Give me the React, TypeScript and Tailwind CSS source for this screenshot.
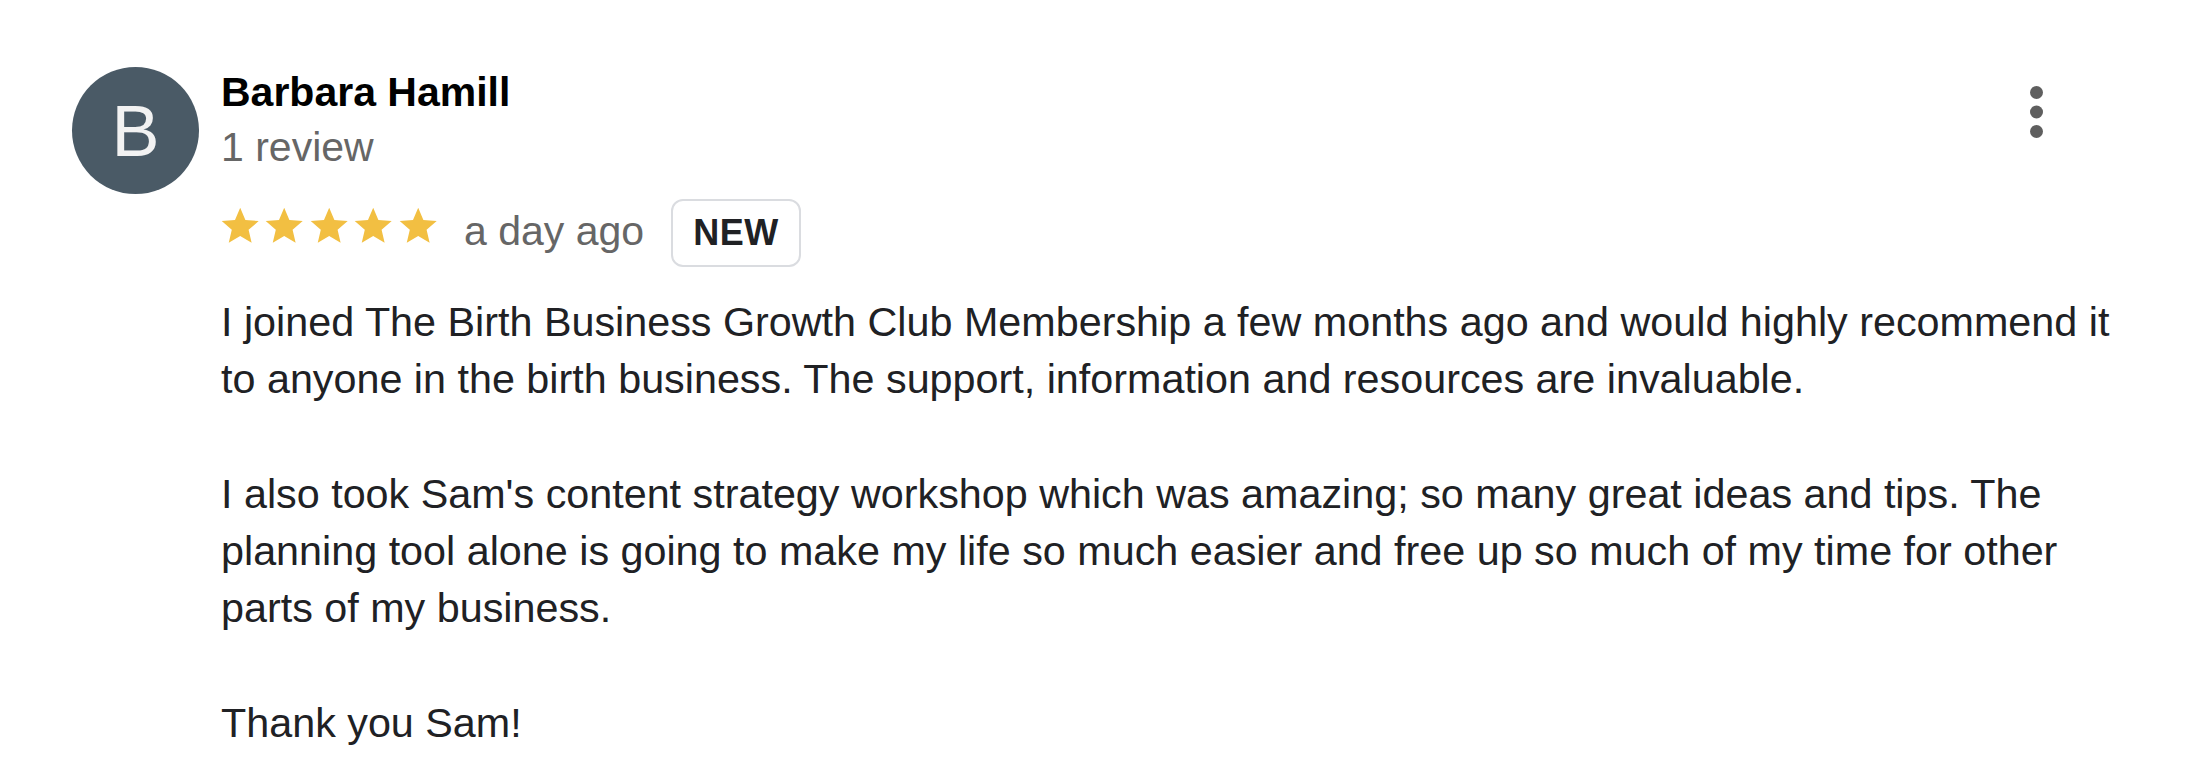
import {ReactElement} from "react";

const Star = (): ReactElement => (
    <svg viewBox="0 0 24 24" className="w-[44.4px] h-[44.4px] shrink-0">
        <path
            fill="#f2bf42"
            d="M12 17.27L18.18 21l-1.64-7.03L22 9.24l-7.19-.61L12 2 9.19 8.63 2 9.24l5.46 4.73L5.82 21z"
        />
    </svg>
);

const MoreDots = (): ReactElement => (
    <svg width="13" height="52" viewBox="0 0 13 52" className="shrink-0">
        <circle cx="6.5" cy="6.5" r="6.5" fill="#5f5f5f"/>
        <circle cx="6.5" cy="26" r="6.5" fill="#5f5f5f"/>
        <circle cx="6.5" cy="45.5" r="6.5" fill="#5f5f5f"/>
    </svg>
);

const App = (): ReactElement => {
    return (
        <div className="w-[2189px] h-[782px] bg-white overflow-hidden font-['Liberation_Sans',Arial,sans-serif]">
            <div className="flex pl-[72px] pt-[65px]">

                {/* avatar */}
                <div className="mt-[2px] w-[127px] h-[127px] rounded-full bg-[#4a5a66] flex items-center justify-center shrink-0">
                    <span className="text-[72px] leading-none text-[#f2f2f2]">B</span>
                </div>

                <div className="ml-[22px] w-[1919px]">
                    <div className="flex items-start">
                        <div className="flex-1">
                            <div className="text-[41px] leading-[55px] font-bold text-black">Barbara Hamill</div>
                            <div className="text-[41px] leading-[55px] text-[#666666]">1 review</div>
                        </div>
                        <div className="mt-[21px] mr-[97px]">
                            <MoreDots/>
                        </div>
                    </div>

                    <div className="mt-[24px] flex items-start h-[68px]">
                        <div className="flex -ml-[3px] mt-[5px]">
                            <Star/><Star/><Star/><Star/><Star/>
                        </div>
                        <span className="ml-[24px] mt-[9px] text-[41px] leading-[47px] text-[#666666]">a day ago</span>
                        <span className="ml-[27px] w-[130px] h-[68px] border-2 border-[#dadce0] rounded-[12px] flex items-center justify-center text-[36px] leading-none font-bold tracking-[0.5px] text-[#202124]">
                            NEW
                        </span>
                    </div>

                    <p className="mt-[27px] text-[41.3px] leading-[57.3px] text-[#202124]">
                        I joined The Birth Business Growth Club Membership a few months ago and would highly recommend it to anyone in the birth business. The support, information and resources are invaluable.
                        <br/><br/>
                        I also took Sam's content strategy workshop which was amazing; so many great ideas and tips. The planning tool alone is going to make my life so much easier and free up so much of my time for other parts of my business.
                        <br/><br/>
                        Thank you Sam!
                    </p>
                </div>
            </div>
        </div>
    );
}

export default App;
